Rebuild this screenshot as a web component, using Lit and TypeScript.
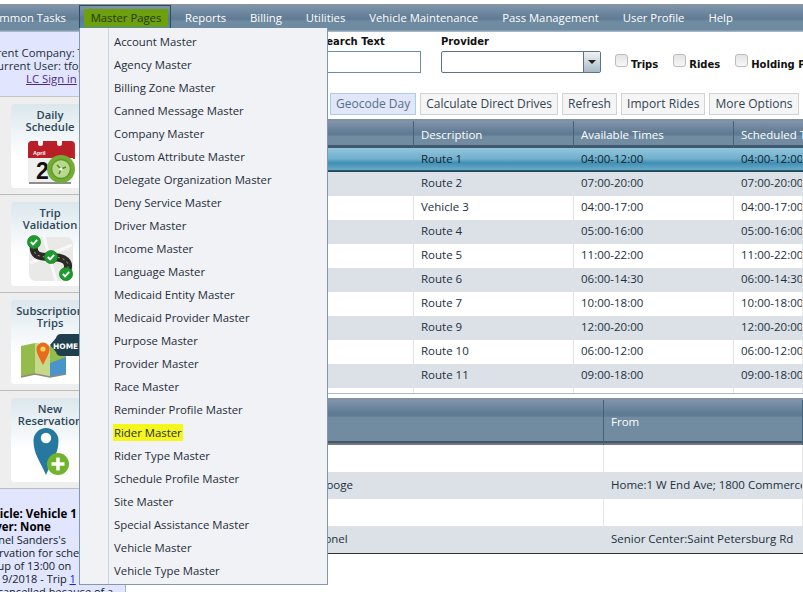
import { LitElement, html, css, svg } from "lit";
import { customElement } from "lit/decorators.js";

const NAV = ["Reports", "Billing", "Utilities", "Vehicle Maintenance", "Pass Management", "User Profile", "Help"];
const MENU = ["Account Master", "Agency Master", "Billing Zone Master", "Canned Message Master", "Company Master", "Custom Attribute Master", "Delegate Organization Master", "Deny Service Master", "Driver Master", "Income Master", "Language Master", "Medicaid Entity Master", "Medicaid Provider Master", "Purpose Master", "Provider Master", "Race Master", "Reminder Profile Master", "Rider Master", "Rider Type Master", "Schedule Profile Master", "Site Master", "Special Assistance Master", "Vehicle Master", "Vehicle Type Master"];
const ROUTES = [["Route 1", "04:00-12:00"], ["Route 2", "07:00-20:00"], ["Vehicle 3", "04:00-17:00"], ["Route 4", "05:00-16:00"], ["Route 5", "11:00-22:00"], ["Route 6", "06:00-14:30"], ["Route 7", "10:00-18:00"], ["Route 9", "12:00-20:00"], ["Route 10", "06:00-12:00"], ["Route 11", "09:00-18:00"], ["", ""]];
const RIDES = [["", ""], ["Ebenezer Scrooge", "Home:1 W End Ave; 1800 Commerce St"], ["", ""], ["Sanders, J. Lionel", "Senior Center:Saint Petersburg Rd"]];

const check = (x: number, y: number) => svg`<circle cx=${x} cy=${y} r="6.6" fill="#1f9a2e" stroke="#0d7a1e" stroke-width=".6"/><path d="M${x - 3.2} ${y}l2.3 2.4 4-4.6" fill="none" stroke="#fff" stroke-width="1.9"/>`;

const ICONS = [
  svg`<path d="M8 12q0-4 4-4h39q4 0 4 4v14H8z" fill="#c0272d"/><path d="M8 25h45v22q0 3-3 3H11q-3 0-3-3z" fill="#efefef"/><path d="M8 14q0-6 4-6h39q2 0 2 6v11H8z" fill="#b81f27"/><rect x="18" y="4" width="5" height="9" rx="2.5" fill="#f4f7f8"/><rect x="37" y="4" width="5" height="9" rx="2.5" fill="#f4f7f8"/><rect x="9" y="49" width="42" height="2" fill="#8d8d8d"/><text x="13" y="22" font-family="Liberation Sans" font-size="5.5" font-weight="700" fill="#fff">April</text><text x="16" y="46" font-family="Liberation Sans" font-size="23" font-weight="700" fill="#111">2</text><circle cx="41" cy="36" r="14" fill="#74ad34"/><circle cx="41" cy="36" r="9.5" fill="#b8d88c" stroke="#5f9a28" stroke-width="1.5"/><path d="M41 36l-4-4M41 36l5-2M41 36l-2 5" stroke="#4f8a20" stroke-width="1.5"/><circle cx="41" cy="36" r="1.6" fill="#fff"/>`,
  svg`<rect x="9" y="6" width="44" height="44" rx="7" fill="#e9e9e7"/><path d="M10 32L52 14M24 6l12 44" stroke="#f8f8f8" stroke-width="3"/><path d="M14 11C12 25 18 26 31 26C44 26 52 30 46 43" fill="none" stroke="#2a2a2a" stroke-width="8"/><path d="M14 11C12 25 18 26 31 26C44 26 52 30 46 43" fill="none" stroke="#d9c34a" stroke-width=".8" stroke-dasharray="2 3"/>${check(14, 11)}${check(31, 26)}${check(46, 43)}`,
  svg`<path d="M1 17l14-3 15 3 16-3v31l-16 3-15-3-14 3z" fill="#94bc4a"/><path d="M15 14l15 3v31l-15-3z" fill="#c6d98a"/><path d="M30 34l16-6v17l-16 3z" fill="#4a94cc"/><path d="M1 48l14-3 15 3 16-3" fill="none" stroke="#8b8b80" stroke-width="1.4"/><path d="M23 36C19 28 16.500 24 16.500 20a6.500 6.500 0 0 1 13 0C29.500 24 27 28 23 36z" fill="#e86a1c"/><circle cx="23" cy="20" r="2.600" fill="#f7d257"/><path d="M30 16l6-7q1-4 5-4h19v22H41q-4 0-5-4z" fill="#1f3f4f"/><text x="33" y="19.500" font-family="DejaVu Sans" font-size="7.500" fill="#fff">HOME</text>`,
  svg`<path d="M26 48C20 34 13.500 27 13.500 13.500a12.500 12.500 0 0 1 25 0C38.500 27 32 34 26 48z" fill="#2678a0"/><circle cx="26" cy="11" r="5.200" fill="#fff"/><circle cx="38" cy="37" r="11" fill="#71b32a"/><path d="M38 30.500v13M31.500 37h13" stroke="#fff" stroke-width="3.500"/>`,
];
const CARDS = [["Daily", "Schedule"], ["Trip", "Validation"], ["Subscription", "Trips"], ["New", "Reservation"]];

@customElement("app-root")
export class AppRoot extends LitElement {
  static styles = css`
    :host { display: block; position: relative; width: 803px; height: 592px; overflow: hidden; background: #fff; font: 11.5px/16px "Open Sans", sans-serif; color: #22303c; }
    .strip { height: 4px; background: #fff; border-bottom: 1px solid #8f9499; }
    .nav { display: flex; height: 27px; align-items: stretch; color: #fff; font-size: 11.3px; background: linear-gradient(#8096ad, #5f7a93 52%, #6f8ba1 60%, #6f8ba1 92%, #b4c1cd); }
    .nav-item { display: flex; align-items: center; padding: 0 12px 2px; white-space: nowrap; }
    .nav-first { width: 79px; box-sizing: border-box; padding: 0 0 2px; justify-content: flex-end; overflow: hidden; }
    .nav-first span { padding-right: 13px; }
    .nav-active { width: 92px; box-sizing: border-box; padding: 0; margin: 0 2px 3px 0; justify-content: center; border: 1px solid #2b4d5e; border-bottom: 0; background: linear-gradient(#7d93aa, #5b7a94 55%, #4f8fae); }
    .nav-active mark { background: #6e9f0c; color: #1f3a10; padding: 2px 7px 3px; margin: 1px 0 0 2px; line-height: 13px; border-radius: 1px; }
    .body { display: grid; grid-template-columns: 126px 1fr; }
    .side { background: #eeeeee; overflow: hidden; height: 560px; border-right: 1px solid #a4b4c4; }
    .who { height: 65px; box-sizing: border-box; padding-top: 14px; background: #e1e5fe; border-bottom: 1px solid #c4c4c4; line-height: 13px; font-size: 11.3px; }
    .who div { white-space: nowrap; }
    .who .co { margin-left: -22px; }
    .who .us { margin-left: -10px; }
    .who a { margin-left: 26px; color: #4d2a85; text-decoration: underline; }
    .sec { height: 98px; box-sizing: border-box; padding: 7px 0 0 11px; border-bottom: 1px solid #bcbcbc; }
    .card { width: 78px; height: 84px; box-sizing: border-box; padding-top: 5px; border-radius: 4px; background: linear-gradient(#dbe7ed, #fff 62%); text-align: center; font-size: 11.2px; line-height: 12px; color: #2c4656; font-weight: 600; white-space: nowrap; }
    .card-title { display: flex; flex-direction: column; align-items: center; }
    .card svg { display: block; width: 60px; height: 52px; margin: 0 0 0 9px; overflow: visible; }
    .note { background: #e1e5fe; height: 110px; padding-top: 18px; line-height: 13px; white-space: nowrap; color: #111c28; font-size: 11px; }
    .note b { display: block; color: #000; margin-left: -22px; font-size: 11.5px; }
    .n1 { margin-left: -17px; }
    .n2 { margin-left: -23px; }
    .n3 { margin-left: -23px; }
    .n4 { margin-left: -21px; }
    .n5 { margin-left: -25px; }
    .note a { color: #1a1ae0; text-decoration: underline; }
    .main { min-width: 0; overflow: hidden; }
    .filters { display: flex; gap: 20px; height: 61px; box-sizing: border-box; padding: 3px 0 0 193px; }
    .label { font: 700 10px/14px "DejaVu Sans", sans-serif; color: #111; white-space: nowrap; }
    .input { width: 102px; height: 22px; box-sizing: border-box; margin-top: 2px; border: 1px solid #6f8ba1; background: #fff; }
    .combo { display: flex; justify-content: flex-end; width: 160px; height: 22px; box-sizing: border-box; margin-top: 2px; border: 1px solid #5d7488; border-radius: 2px; }
    .combo i { display: flex; align-items: center; justify-content: center; width: 16px; border-left: 1px solid #5d7488; background: linear-gradient(#f0f3f6, #a9bac8); }
    .combo i::after { content: ""; border: 4px solid transparent; border-top: 4px solid #222; border-bottom: 0; }
    .checks { display: flex; gap: 15px; padding-top: 20px; margin-left: -6px; }
    .chk { display: flex; gap: 3px; }
    .chk i { width: 11px; height: 11px; margin-top: -1px; border: 1px solid #bbb; border-radius: 3px; background: linear-gradient(#e4e4e4, #f6f6f6); }
    .chk .label { padding-top: 3px; }
    .btns { display: flex; gap: 4px; height: 26px; box-sizing: border-box; padding-left: 204px; white-space: nowrap; }
    .btn { height: 22px; box-sizing: border-box; padding: 0 5px; border: 1px solid #d2d2d2; background: #f5f5f5; line-height: 20px; color: #2f4454; font-size: 12px; }
    .btn-on { background: #e1e6fb; border-color: #a7d0e2; color: #54708a; }
    .b-imp { letter-spacing: .08px; }
    .head { display: grid; color: #fff; border-top: 2px solid #8291a0; height: 29px; box-sizing: border-box; background: linear-gradient(#8195ab, #5f7a93 45%, #5f7a93 52%, #718ba1 56%, #718ba1 90%, #3f586e 90%, #3f586e); }
    .head span { padding: 6px 7px 0; border-right: 1px solid #46627a; white-space: nowrap; }
    .rows { height: 245px; overflow: hidden; }
    .row { display: grid; height: 24px; }
    .row span { padding: 3px 7px 0; border-right: 1px solid #e6e6e6; white-space: nowrap; overflow: hidden; }
    .row:nth-child(even) { background: #dbe1e7; }
    .row:nth-child(even) span { border-color: transparent; }
    .row.sel { background: linear-gradient(#92c5db, #6fb0cd 45%, #3f8fb4 62%, #6cabc8 92%, #1b4a60 94%); }
    .row.sel span { border-color: transparent; color: #14222c; }
    .t1 { grid-template-columns: 288px 160px 160px 1fr; }
    .t2 { grid-template-columns: 478px 1fr; }
    .t2 .name { padding-left: 131px; }
    .sep { height: 4px; border-top: 1px solid #a9b9c8; background: #fff; }
    .head2 { height: 47px; background: linear-gradient(#8195ab, #5f7a93 30%, #5f7a93 36%, #718ba1 38%, #718ba1 92%, #3f586e 92%, #3f586e 96%, #777 96%); }
    .head2 span { padding-top: 14px; }
    .rows2 { border-bottom: 1px solid #333; }
    .rows2 .row { height: 27px; }
    .rows2 .row span { padding-top: 5px; }
    .menu { position: absolute; left: 79px; top: 28px; width: 249px; height: 557px; box-sizing: border-box; padding: 2px 0 0 28px; background: #f0f2f5; border: 1px solid #8397ad; border-top: 0; font-size: 11.35px; }
    .menu ul { list-style: none; margin: -2px 0 0; padding: 2px 0 0 5px; height: 100%; border-left: 1px solid #cbd6e2; }
    .menu li { height: 23px; line-height: 23px; white-space: nowrap; color: #1f2d3a; }
    .menu mark { background: #f4f61c; color: inherit; padding: 1px 1px; margin-left: -1px; }
  `;

  render() {
    return html`
      <div class="strip"></div>
      <div class="nav">
        <div class="nav-item nav-first"><span>Common Tasks</span></div>
        <div class="nav-item nav-active"><mark>Master Pages</mark></div>
        ${NAV.map((n) => html`<div class="nav-item">${n}</div>`)}
      </div>
      <div class="body">
        <div class="side">
          <div class="who">
            <div class="co">Current Company: Transit</div>
            <div class="us">Current User: tfogarty</div>
            <div><a>LC Sign in</a></div>
          </div>
          ${CARDS.map((c, i) => html`<div class="sec"><div class="card"><div class="card-title"><span>${c[0]}</span><span>${c[1]}</span></div><svg viewBox="0 0 60 52">${ICONS[i]}</svg></div></div>`)}
          <div class="note">
            <b>Vehicle: Vehicle 1</b><b>Driver: None</b>
            <div class="n1">Lionel Sanders's</div><div class="n2">reservation for schedule</div><div class="n3">pickup of 13:00 on</div>
            <div class="n4">11/19/2018 - Trip <a>1</a></div><div class="n5">was cancelled because of a</div>
          </div>
        </div>
        <div class="main">
          <div class="filters">
            <div><div class="label">Search Text</div><div class="input"></div></div>
            <div><div class="label">Provider</div><div class="combo"><i></i></div></div>
            <div class="checks">
              <div class="chk"><i></i><span class="label">Trips</span></div>
              <div class="chk"><i></i><span class="label">Rides</span></div>
              <div class="chk"><i></i><span class="label">Holding Pen</span></div>
            </div>
          </div>
          <div class="btns">
            <div class="btn btn-on">Geocode Day</div><div class="btn">Calculate Direct Drives</div><div class="btn">Refresh</div><div class="btn b-imp">Import Rides</div><div class="btn">More Options</div>
          </div>
          <div class="head t1"><span>Vehicle</span><span>Description</span><span>Available Times</span><span>Scheduled Times</span></div>
          <div class="rows">
            ${ROUTES.map((r, i) => html`<div class="row t1 ${i === 0 ? "sel" : ""}"><span></span><span>${r[0]}</span><span>${r[1]}</span><span>${r[1]}</span></div>`)}
          </div>
          <div class="sep"></div>
          <div class="head head2 t2"><span>Rider</span><span>From</span></div>
          <div class="rows2">
            ${RIDES.map((r) => html`<div class="row t2"><span class="name">${r[0]}</span><span>${r[1]}</span></div>`)}
          </div>
        </div>
      </div>
      <div class="menu"><ul>${MENU.map((m) => html`<li>${m === "Rider Master" ? html`<mark>${m}</mark>` : m}</li>`)}</ul></div>
    `;
  }
}
